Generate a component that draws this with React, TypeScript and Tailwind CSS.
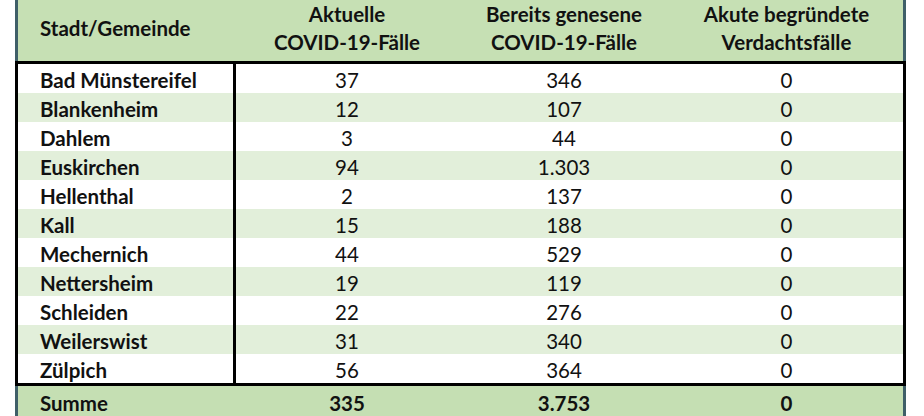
const rows: [string, string, string, string][] = [
  ["Bad Münstereifel", "37", "346", "0"],
  ["Blankenheim", "12", "107", "0"],
  ["Dahlem", "3", "44", "0"],
  ["Euskirchen", "94", "1.303", "0"],
  ["Hellenthal", "2", "137", "0"],
  ["Kall", "15", "188", "0"],
  ["Mechernich", "44", "529", "0"],
  ["Nettersheim", "19", "119", "0"],
  ["Schleiden", "22", "276", "0"],
  ["Weilerswist", "31", "340", "0"],
  ["Zülpich", "56", "364", "0"],
];

const cols = "grid grid-cols-[218px_222px_212px_1fr]";

export default function App() {
  return (
    <div className="w-[924px] h-[416px] overflow-hidden bg-white pl-[15px] font-['Lato',sans-serif] text-[20.5px] text-[#111]">
      <div className="w-[891px]">
        {/* Header */}
        <div className={`${cols} h-[61px] pb-[5px] items-center bg-[#c6e0b4] border-x-[3px] border-[#3f5f68] font-bold leading-[28px]`}>
          <div className="pl-[22px]">Stadt/Gemeinde</div>
          <div className="text-center">
            Aktuelle
            <br />
            COVID-19-Fälle
          </div>
          <div className="text-center">
            Bereits genesene
            <br />
            COVID-19-Fälle
          </div>
          <div className="text-center">
            Akute begründete
            <br />
            Verdachtsfälle
          </div>
        </div>

        {/* Body */}
        <div className="border-[3px] border-black">
          {rows.map(([name, a, b, c], i) => (
            <div
              key={name}
              className={`${cols} h-[29px] items-center leading-[26px] ${i % 2 === 1 ? "bg-[#e2efda]" : "bg-white"}`}
            >
              <div className="h-full pt-[3px] pl-[22px] font-bold border-r-[3px] border-black">
                {name}
              </div>
              <div className="pt-[3px] text-center">{a}</div>
              <div className="pt-[3px] text-center">{b}</div>
              <div className="pt-[3px] text-center">{c}</div>
            </div>
          ))}
        </div>

        {/* Summe */}
        <div className={`${cols} h-[34px] items-center bg-[#c5dfb3] border-x-[3px] border-[#3f5f68] font-bold`}>
          <div className="pl-[22px]">Summe</div>
          <div className="text-center">335</div>
          <div className="text-center">3.753</div>
          <div className="text-center">0</div>
        </div>
      </div>
    </div>
  );
}
